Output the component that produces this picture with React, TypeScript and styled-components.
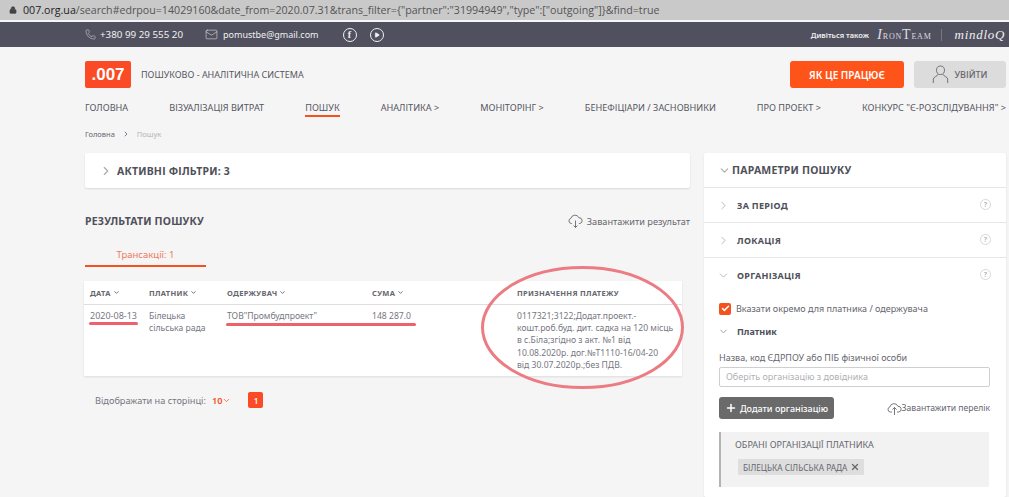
import styled, { createGlobalStyle } from 'styled-components'
import { ChevronDown, ChevronRight, Check, Plus, X, Lock, Phone, Mail, Play } from 'lucide-react'

const GlobalStyle = createGlobalStyle`
  html, body {
    margin: 0;
    padding: 0;
    background: #f5f5f5;
    overflow: hidden;
  }
  body {
    font-family: "Noto Sans", "Open Sans", sans-serif;
    color: #55555f;
  }
  * { box-sizing: border-box; }
`

const Page = styled.div`
  position: relative;
  width: 1009px;
  height: 497px;
  overflow: hidden;
  background: #f5f5f5;
`

const AddressBar = styled.div`
  height: 20px;
  background: #c9c9c9;
  display: flex;
  align-items: center;
  gap: 6px;
  padding-left: 9px;
  font-family: "Open Sans", sans-serif;
  font-size: 10.65px;
  color: #555;
  white-space: nowrap;
  b { font-weight: 400; color: #222; }
`

const TopBar = styled.div`
  margin-top: 2px;
  height: 25px;
  background: #50505f;
  color: #f0f0f0;
  display: flex;
  align-items: center;
  justify-content: space-between;
  padding: 0 4px 0 85px;
  font-size: 9.8px;
`

const Contacts = styled.div`
  display: flex;
  align-items: center;
`

const Contact = styled.span<{ $compact?: boolean }>`
  display: inline-flex;
  align-items: center;
  gap: ${p => (p.$compact ? '5px' : '4px')};
  margin-right: ${p => (p.$compact ? '24px' : '22px')};
  font-size: ${p => (p.$compact ? '9px' : '9.8px')};
  white-space: nowrap;
`

const RoundIcon = styled.span`
  width: 14px;
  height: 14px;
  border: 1px solid #f0f0f0;
  border-radius: 50%;
  margin-right: 13px;
  display: inline-flex;
  align-items: center;
  justify-content: center;
  font-size: 10px;
  font-weight: 700;
  font-family: "Liberation Serif", serif;
`

const Partners = styled.div`
  display: flex;
  align-items: center;
  font-size: 7.5px;
  font-weight: 600;
  white-space: nowrap;
`

const IronTeam = styled.span`
  margin-left: 8px;
  font-family: "Liberation Serif", serif;
  font-size: 8px;
  font-weight: 400;
  letter-spacing: 0.8px;
  color: #dcdce0;
  i { font-size: 15px; }
  em { font-style: normal; font-size: 14px; }
`

const PartnerDivider = styled.span`
  width: 1px;
  height: 12px;
  background: #77777f;
  margin: 0 13px 0 9px;
`

const MindLogo = styled.span`
  font-family: "Liberation Serif", serif;
  font-style: italic;
  font-size: 13px;
  font-weight: 400;
  letter-spacing: 0.7px;
`

const Header = styled.header`
  display: flex;
  align-items: center;
  justify-content: space-between;
  padding: 14px 3px 0 85px;
`

const Brand = styled.div`
  display: flex;
  align-items: center;
  gap: 10px;
  font-size: 9px;
  color: #55555f;
`

const Logo = styled.div`
  width: 46px;
  height: 27px;
  border-radius: 2px;
  background: #fb4a26;
  color: #fff;
  font-family: "Liberation Sans", sans-serif;
  font-weight: 700;
  font-size: 17px;
  display: flex;
  align-items: center;
  justify-content: center;
`

const HeaderActions = styled.div`
  display: flex;
  gap: 10px;
`

const HeaderButton = styled.div<{ $primary?: boolean }>`
  height: 27px;
  width: ${p => (p.$primary ? '114px' : '92px')};
  border-radius: 3px;
  background: ${p => (p.$primary ? '#ff5419' : '#dcdcdc')};
  color: ${p => (p.$primary ? '#fff' : '#66666e')};
  font-size: ${p => (p.$primary ? '10px' : '9px')};
  font-weight: ${p => (p.$primary ? 600 : 500)};
  display: flex;
  align-items: center;
  justify-content: center;
  gap: 5px;
`

const Nav = styled.nav`
  display: flex;
  justify-content: space-between;
  padding: 12px 3px 0 85px;
`

const NavItem = styled.span<{ $active?: boolean }>`
  height: 17px;
  font-size: 9.15px;
  line-height: 15px;
  white-space: nowrap;
  color: #55555f;
  border-bottom: 2px solid ${p => (p.$active ? '#f4511e' : 'transparent')};
`

const Breadcrumbs = styled.div`
  display: flex;
  align-items: center;
  gap: 7px;
  padding: 6px 0 0 85px;
  height: 28px;
  font-size: 7.5px;
  color: #66666e;
  span:last-child { color: #b4b4b8; }
`

const Main = styled.main`
  display: grid;
  grid-template-columns: 605px 302px;
  gap: 14px;
  padding: 8px 0 0 85px;
`

const FilterCard = styled.div`
  height: 35px;
  background: #fff;
  border-radius: 2px;
  box-shadow: 0 1px 2px rgba(0, 0, 0, 0.12);
  display: flex;
  align-items: center;
  gap: 4px;
  padding-left: 14px;
  font-size: 10.5px;
  font-weight: 700;
  color: #50505a;
  letter-spacing: 0.2px;
`

const ResultsHead = styled.div`
  display: flex;
  justify-content: space-between;
  align-items: center;
  margin-top: 24px;
  height: 18px;
`

const ResultsTitle = styled.h2`
  margin: 0;
  font-size: 10.5px;
  font-weight: 700;
  color: #50505a;
  letter-spacing: 0.2px;
`

const DownloadLink = styled.span`
  display: inline-flex;
  align-items: center;
  gap: 4px;
  font-size: 9.2px;
  color: #66666e;
  white-space: nowrap;
`

const Tab = styled.div`
  width: 121px;
  height: 25px;
  margin-top: 12px;
  border-bottom: 2px solid #f4511e;
  color: #f0785a;
  font-size: 9.5px;
  text-align: center;
  line-height: 25px;
`

const Table = styled.div`
  width: 598px;
  height: 95px;
  margin: 14px 0 0 -1px;
  background: #fff;
  box-shadow: 0 1px 2px rgba(0, 0, 0, 0.1);
`

const TableRow = styled.div<{ $head?: boolean }>`
  display: grid;
  grid-template-columns: 59px 78px 145px 145px 1fr;
  padding-left: 6px;
  ${p => p.$head && `
    height: 24px;
    align-items: center;
    border-bottom: 1px solid #dedede;
    font-size: 7.5px;
    font-weight: 700;
    letter-spacing: 0.3px;
    color: #66666e;
  `}
  ${p => !p.$head && `
    padding-top: 5px;
    font-size: 8.6px;
    line-height: 12.2px;
    color: #77777f;
  `}
`

const HeadCell = styled.span`
  display: inline-flex;
  align-items: center;
  gap: 2px;
`

const DateCell = styled.span`
  font-size: 9px;
`

const PayCell = styled.div`
  white-space: nowrap;
`

const Pagination = styled.div`
  display: flex;
  align-items: center;
  height: 16px;
  margin: 16px 0 0 10px;
  font-size: 9.2px;
  color: #77777f;
`

const PerPage = styled.span`
  display: inline-flex;
  align-items: center;
  margin-left: 6px;
  color: #f4511e;
  font-weight: 600;
`

const PageBadge = styled.span`
  width: 15px;
  height: 16px;
  margin-left: 17px;
  border-radius: 2px;
  background: #fb4a26;
  color: #fff;
  font-size: 8px;
  font-weight: 600;
  display: flex;
  align-items: center;
  justify-content: center;
`

const Sidebar = styled.aside`
  height: 344px;
  background: #fff;
  border-radius: 2px;
  box-shadow: 0 1px 2px rgba(0, 0, 0, 0.1);
`

const PanelTitle = styled.div`
  height: 35px;
  display: flex;
  align-items: center;
  gap: 1px;
  padding-left: 14px;
  font-size: 10.5px;
  font-weight: 700;
  color: #50505a;
  border-bottom: 1px solid #e6e6e6;
  letter-spacing: 0.2px;
`

const Section = styled.div<{ $open?: boolean }>`
  height: 35px;
  display: flex;
  align-items: center;
  padding: 0 15px 0 13px;
  gap: 7px;
  font-size: 9px;
  font-weight: 700;
  letter-spacing: 0.3px;
  color: #50505a;
  border-bottom: ${p => (p.$open ? 'none' : '1px solid #e6e6e6')};
`

const SectionLabel = styled.span`
  flex: 1;
`

const Help = styled.span`
  width: 11px;
  height: 11px;
  margin-top: -2px;
  border: 1px solid #d8d8d8;
  border-radius: 50%;
  color: #b8b8b8;
  font-size: 7px;
  line-height: 9px;
  text-align: center;
`

const CheckRow = styled.label`
  display: flex;
  align-items: center;
  gap: 5px;
  padding: 9px 0 0 15px;
  font-size: 9px;
  color: #66666e;
`

const CheckBox = styled.span`
  width: 12px;
  height: 12px;
  border-radius: 2px;
  background: #f4511e;
  color: #fff;
  display: flex;
  align-items: center;
  justify-content: center;
`

const SubHead = styled.div`
  display: flex;
  align-items: center;
  gap: 8px;
  padding: 10px 0 0 14px;
  font-size: 9px;
  font-weight: 700;
  color: #50505a;
`

const FieldLabel = styled.div`
  margin: 13px 0 0 15px;
  font-size: 9px;
  color: #66666e;
`

const Input = styled.div`
  width: 271px;
  height: 20px;
  margin: 3px 0 0 15px;
  padding-left: 6px;
  background: #fff;
  border: 1px solid #cfcfcf;
  border-radius: 2px;
  font-size: 9px;
  line-height: 18px;
  color: #b0b0b4;
`

const ActionsRow = styled.div`
  display: flex;
  justify-content: space-between;
  align-items: center;
  width: 271px;
  margin: 10px 0 0 15px;
`

const AddButton = styled.div`
  width: 115px;
  height: 22px;
  border-radius: 3px;
  background: #6a6a6a;
  color: #fff;
  font-size: 9px;
  font-weight: 500;
  display: flex;
  align-items: center;
  justify-content: center;
  gap: 3px;
`

const UploadLink = styled.span`
  display: inline-flex;
  align-items: center;
  font-size: 8.6px;
  color: #66666e;
  white-space: nowrap;
`

const Selected = styled.div`
  width: 270px;
  height: 55px;
  margin: 13px 0 0 15px;
  padding: 6px 0 0 14px;
  background: #f2f2f2;
  border-left: 2px solid #b4b4b4;
  font-size: 9px;
  color: #66666e;
`

const Tag = styled.span`
  display: inline-flex;
  align-items: center;
  gap: 3px;
  height: 16px;
  margin: 8px 0 0 3px;
  padding: 0 4px 0 5px;
  background: #dedede;
  border-radius: 1px;
  font-size: 8.3px;
  color: #66666e;
`

/* hand drawn annotations on top of the screenshot */
const Underline = styled.span<{ $x: number; $y: number; $w: number }>`
  position: absolute;
  left: ${p => p.$x}px;
  top: ${p => p.$y}px;
  width: ${p => p.$w}px;
  height: 3px;
  border-radius: 2px;
  background: #ef5f6c;
`

const Ellipse = styled.svg`
  position: absolute;
  left: 478px;
  top: 262px;
`

const CloudDown = () => (
  <svg width="15" height="14" viewBox="0 0 15 14" fill="none" stroke="#55555f" strokeWidth="0.8">
    <path d="M4 9.5H3.2a2.6 2.6 0 0 1-.3-5.1 4.2 4.2 0 0 1 8-.6 2.9 2.9 0 0 1 1 5.7h-1" />
    <path d="M7.5 6.5v7M5.6 11.5l1.9 2 1.9-2" />
  </svg>
)

const CloudUp = () => (
  <svg width="15" height="13" viewBox="0 0 15 13" fill="none" stroke="#55555f" strokeWidth="0.8">
    <path d="M5 10H3.4a2.6 2.6 0 0 1-.5-5.1 4.2 4.2 0 0 1 8-.6 2.9 2.9 0 0 1 1 5.7H10" />
    <path d="M7.5 13V5.5M5.4 7.6l2.1-2.1 2.1 2.1" />
  </svg>
)

const UserIcon = () => (
  <svg width="17" height="19" viewBox="0 0 17 19" fill="none" stroke="#66666e" strokeWidth="0.9">
    <path d="M8.5 1c-2.6 0-4 1.7-4 4.2 0 2 .9 4.4 4 4.4s4-2.4 4-4.4C12.5 2.7 11.1 1 8.5 1z" />
    <path d="M6 9.3c0 1.7-4.7 2.6-4.7 4.7V18M11 9.3c0 1.7 4.7 2.6 4.7 4.7V18" />
  </svg>
)

const navItems = [
  { label: 'ГОЛОВНА' },
  { label: 'ВІЗУАЛІЗАЦІЯ ВИТРАТ' },
  { label: 'ПОШУК', active: true },
  { label: 'АНАЛІТИКА >' },
  { label: 'МОНІТОРІНГ >' },
  { label: 'БЕНЕФІЦІАРИ / ЗАСНОВНИКИ' },
  { label: 'ПРО ПРОЕКТ >' },
  { label: 'КОНКУРС "Є-РОЗСЛІДУВАННЯ" >' },
]

const App = () => {
  return (
    <Page>
      <GlobalStyle />
      <AddressBar>
        <Lock size={8} fill="#444" stroke="#444" />
        <span>
          <b>007.org.ua</b>/search#edrpou=14029160&amp;date_from=2020.07.31&amp;trans_filter={'{"partner":"31994949","type":["outgoing"]}'}&amp;find=true
        </span>
      </AddressBar>

      <TopBar>
        <Contacts>
          <Contact><Phone size={11} strokeWidth={1} />+380 99 29 555 20</Contact>
          <Contact $compact><Mail size={13} strokeWidth={1} />pomustbe@gmail.com</Contact>
          <RoundIcon>f</RoundIcon>
          <RoundIcon><Play size={6} fill="#f0f0f0" /></RoundIcon>
        </Contacts>
        <Partners>
          Дивіться також
          <IronTeam><i>I</i>RON<em>T</em>EAM</IronTeam>
          <PartnerDivider />
          <MindLogo>mindloQ</MindLogo>
        </Partners>
      </TopBar>

      <Header>
        <Brand>
          <Logo>.007</Logo>
          ПОШУКОВО - АНАЛІТИЧНА СИСТЕМА
        </Brand>
        <HeaderActions>
          <HeaderButton $primary>ЯК ЦЕ ПРАЦЮЄ</HeaderButton>
          <HeaderButton><UserIcon />УВІЙТИ</HeaderButton>
        </HeaderActions>
      </Header>

      <Nav>
        {navItems.map(item => (
          <NavItem key={item.label} $active={item.active}>{item.label}</NavItem>
        ))}
      </Nav>

      <Breadcrumbs>
        <span>Головна</span>
        <ChevronRight size={8} strokeWidth={2.5} />
        <span>Пошук</span>
      </Breadcrumbs>

      <Main>
        <section>
          <FilterCard>
            <ChevronRight size={14} color="#aaa" />
            АКТИВНІ ФІЛЬТРИ: 3
          </FilterCard>

          <ResultsHead>
            <ResultsTitle>РЕЗУЛЬТАТИ ПОШУКУ</ResultsTitle>
            <DownloadLink><CloudDown />Завантажити результат</DownloadLink>
          </ResultsHead>

          <Tab>Трансакції: 1</Tab>

          <Table>
            <TableRow $head>
              <HeadCell>ДАТА <ChevronDown size={7} strokeWidth={3} /></HeadCell>
              <HeadCell>ПЛАТНИК <ChevronDown size={7} strokeWidth={3} /></HeadCell>
              <HeadCell>ОДЕРЖУВАЧ <ChevronDown size={7} strokeWidth={3} /></HeadCell>
              <HeadCell>СУМА <ChevronDown size={7} strokeWidth={3} /></HeadCell>
              <HeadCell>ПРИЗНАЧЕННЯ ПЛАТЕЖУ</HeadCell>
            </TableRow>
            <TableRow>
              <DateCell>2020-08-13</DateCell>
              <span>Білецька<br />сільська рада</span>
              <span>ТОВ"Промбудпроект"</span>
              <span>148 287.0</span>
              <PayCell>
                0117321;3122;Додат.проект.-<br />
                кошт.роб.буд. дит. садка на 120 місць<br />
                в с.Біла;згідно з акт. №1 від<br />
                10.08.2020р. дог.№Т1110-16/04-20<br />
                від 30.07.2020р.;без ПДВ.
              </PayCell>
            </TableRow>
          </Table>

          <Pagination>
            Відображати на сторінці:
            <PerPage>10<ChevronDown size={9} strokeWidth={2} /></PerPage>
            <PageBadge>1</PageBadge>
          </Pagination>
        </section>

        <Sidebar>
          <PanelTitle>
            <ChevronDown size={13} color="#aaa" />
            ПАРАМЕТРИ ПОШУКУ
          </PanelTitle>
          <Section>
            <ChevronRight size={13} color="#aaa" strokeWidth={1.5} />
            <SectionLabel>ЗА ПЕРІОД</SectionLabel>
            <Help>?</Help>
          </Section>
          <Section>
            <ChevronRight size={13} color="#aaa" strokeWidth={1.5} />
            <SectionLabel>ЛОКАЦІЯ</SectionLabel>
            <Help>?</Help>
          </Section>
          <Section $open>
            <ChevronDown size={13} color="#aaa" strokeWidth={1.5} />
            <SectionLabel>ОРГАНІЗАЦІЯ</SectionLabel>
            <Help>?</Help>
          </Section>
          <CheckRow>
            <CheckBox><Check size={9} strokeWidth={4} /></CheckBox>
            Вказати окремо для платника / одержувача
          </CheckRow>
          <SubHead>
            <ChevronDown size={11} color="#999" />
            Платник
          </SubHead>
          <FieldLabel>Назва, код ЄДРПОУ або ПІБ фізичної особи</FieldLabel>
          <Input>Оберіть організацію з довідника</Input>
          <ActionsRow>
            <AddButton><Plus size={12} strokeWidth={3} />Додати організацію</AddButton>
            <UploadLink><CloudUp />Завантажити перелік</UploadLink>
          </ActionsRow>
          <Selected>
            ОБРАНІ ОРГАНІЗАЦІЇ ПЛАТНИКА
            <div>
              <Tag>БІЛЕЦЬКА СІЛЬСЬКА РАДА <X size={10} strokeWidth={3} /></Tag>
            </div>
          </Selected>
        </Sidebar>
      </Main>

      <Underline $x={89} $y={322} $w={49} />
      <Underline $x={226} $y={323} $w={190} />

      <Ellipse width="210" height="130" viewBox="0 0 210 130" fill="none">
        <ellipse cx="104.5" cy="65.5" rx="100" ry="60" stroke="#ec7c83" strokeWidth="3" />
      </Ellipse>
    </Page>
  )
}

export default App
